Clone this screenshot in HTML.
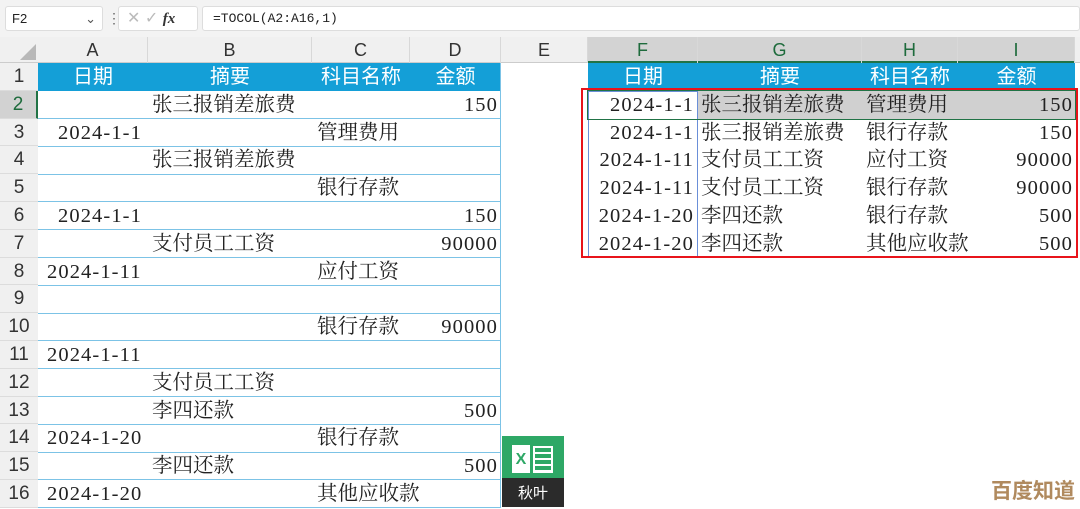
<!DOCTYPE html><html><head><meta charset="utf-8"><style>
*{margin:0;padding:0;box-sizing:border-box}
body{width:1080px;height:508px;overflow:hidden;background:#fff;position:relative;font-family:"Liberation Serif","Noto Serif CJK SC",serif}
.a{position:absolute}
.t{position:absolute;height:27.8px;line-height:29px;font-size:20.5px;color:#222;white-space:nowrap}
.n{letter-spacing:1.1px}
.hdr{position:absolute;top:37px;height:26px;line-height:26px;text-align:center;font-family:"Liberation Sans",sans-serif;font-size:18px;color:#333;border-right:1px solid #d8d8d8}
.rh{position:absolute;left:0;width:38px;height:27.8px;line-height:28px;text-align:center;font-family:"Liberation Sans",sans-serif;font-size:19px;color:#333;background:#f0f0f0;border-bottom:1px solid #dcdcdc}
.bh{position:absolute;top:63px;height:28px;line-height:29px;text-align:center;color:#fff;font-family:"Liberation Sans","Noto Sans CJK SC",sans-serif;font-size:20px}
.hl{position:absolute;left:38px;width:463px;height:1px;background:#7cc3e6}
</style></head><body>
<div class="a" style="left:0;top:0;width:1080px;height:37px;background:#f3f3f3"></div>
<div class="a" style="left:5px;top:6px;width:98px;height:25px;background:#fff;border:1px solid #ddd;border-radius:3px;font:13px 'Liberation Sans',sans-serif;line-height:23px;padding-left:6px;color:#222">F2<span style="position:absolute;right:6px;color:#555">⌄</span></div>
<div class="a" style="left:107px;top:10px;font:14px 'Liberation Sans';color:#666">⋮</div>
<div class="a" style="left:118px;top:6px;width:80px;height:25px;background:#fff;border:1px solid #ddd;border-radius:3px;font:16px 'Liberation Sans';color:#bbb;line-height:23px;padding-left:8px">✕ ✓ <i style="color:#333;font-family:'Liberation Serif';font-weight:bold;font-size:15px">fx</i></div>
<div class="a" style="left:202px;top:6px;width:878px;height:25px;background:#fff;border:1px solid #ddd;border-radius:3px;font:13px 'Liberation Mono',monospace;line-height:23px;padding-left:10px;color:#222">=TOCOL(A2:A16,1)</div>
<div class="a" style="left:0;top:37px;width:1080px;height:26px;background:#f0f0f0;border-bottom:1px solid #ccc"></div>
<div class="a" style="left:20px;top:44px;width:0;height:0;border-left:16px solid transparent;border-bottom:16px solid #b8b8b8"></div>
<div class="hdr" style="left:38px;width:110px">A</div>
<div class="hdr" style="left:148px;width:164px">B</div>
<div class="hdr" style="left:312px;width:98px">C</div>
<div class="hdr" style="left:410px;width:91px">D</div>
<div class="hdr" style="left:501px;width:87px">E</div>
<div class="a" style="left:588px;top:37px;width:487px;height:26px;background:#d3d3d3;border-bottom:2px solid #217346"></div>
<div class="hdr" style="left:588px;width:110px;color:#1e6b3c">F</div>
<div class="hdr" style="left:698px;width:164px;color:#1e6b3c">G</div>
<div class="hdr" style="left:862px;width:96px;color:#1e6b3c">H</div>
<div class="hdr" style="left:958px;width:117px;color:#1e6b3c">I</div>
<div class="rh" style="top:63px">1</div><div class="rh" style="top:90.8px;background:#d2d2d2;color:#1e6b3c;border-right:2px solid #217346">2</div><div class="rh" style="top:118.6px">3</div><div class="rh" style="top:146.4px">4</div><div class="rh" style="top:174.2px">5</div><div class="rh" style="top:202px">6</div><div class="rh" style="top:229.8px">7</div><div class="rh" style="top:257.6px">8</div><div class="rh" style="top:285.4px">9</div><div class="rh" style="top:313.2px">10</div><div class="rh" style="top:341px">11</div><div class="rh" style="top:368.8px">12</div><div class="rh" style="top:396.6px">13</div><div class="rh" style="top:424.4px">14</div><div class="rh" style="top:452.2px">15</div><div class="rh" style="top:480px">16</div>
<div class="a" style="left:38px;top:63px;width:463px;height:28px;background:#149fd7"></div>
<div class="bh" style="left:38px;width:110px">日期</div><div class="bh" style="left:148px;width:164px">摘要</div><div class="bh" style="left:312px;width:98px">科目名称</div><div class="bh" style="left:410px;width:91px">金额</div>
<div class="a" style="left:500px;top:63px;width:1px;height:445px;background:#7cc3e6"></div>
<div class="hl" style="top:118px"></div><div class="hl" style="top:146px"></div><div class="hl" style="top:174px"></div><div class="hl" style="top:201px"></div><div class="hl" style="top:229px"></div><div class="hl" style="top:257px"></div><div class="hl" style="top:285px"></div><div class="hl" style="top:313px"></div><div class="hl" style="top:340px"></div><div class="hl" style="top:368px"></div><div class="hl" style="top:396px"></div><div class="hl" style="top:424px"></div><div class="hl" style="top:452px"></div><div class="hl" style="top:479px"></div><div class="hl" style="top:507px"></div>
<div class="t" style="left:152px;top:90.8px">张三报销差旅费</div><div class="t n" style="right:582px;top:90.8px">150</div>
<div class="t n" style="left:58px;top:118.6px">2024-1-1</div><div class="t" style="left:317px;top:118.6px">管理费用</div>
<div class="t" style="left:152px;top:146.4px">张三报销差旅费</div>
<div class="t" style="left:317px;top:174.2px">银行存款</div>
<div class="t n" style="left:58px;top:202px">2024-1-1</div><div class="t n" style="right:582px;top:202px">150</div>
<div class="t" style="left:152px;top:229.8px">支付员工工资</div><div class="t n" style="right:582px;top:229.8px">90000</div>
<div class="t n" style="left:47px;top:257.6px">2024-1-11</div><div class="t" style="left:317px;top:257.6px">应付工资</div>
<div class="t" style="left:317px;top:313.2px">银行存款</div><div class="t n" style="right:582px;top:313.2px">90000</div>
<div class="t n" style="left:47px;top:341px">2024-1-11</div>
<div class="t" style="left:152px;top:368.8px">支付员工工资</div>
<div class="t" style="left:152px;top:396.6px">李四还款</div><div class="t n" style="right:582px;top:396.6px">500</div>
<div class="t n" style="left:47px;top:424.4px">2024-1-20</div><div class="t" style="left:317px;top:424.4px">银行存款</div>
<div class="t" style="left:152px;top:452.2px">李四还款</div><div class="t n" style="right:582px;top:452.2px">500</div>
<div class="t n" style="left:47px;top:480px">2024-1-20</div><div class="t" style="left:317px;top:480px">其他应收款</div>
<div class="a" style="left:588px;top:63px;width:487px;height:28px;background:#149fd7"></div>
<div class="bh" style="left:588px;width:110px">日期</div><div class="bh" style="left:698px;width:164px">摘要</div><div class="bh" style="left:862px;width:96px">科目名称</div><div class="bh" style="left:958px;width:117px">金额</div>
<div class="a" style="left:698px;top:91px;width:377px;height:28px;background:#d0d0d0"></div>
<div class="a" style="left:588px;top:91px;width:110px;height:166px;border:1px solid #6a8fd8"></div>
<div class="a" style="left:587px;top:90px;width:489px;height:30px;border:1px solid #217346"></div>
<div class="a" style="left:581px;top:88px;width:497px;height:170px;border:2px solid #e8141b"></div>
<div class="t n" style="right:386px;top:90.8px">2024-1-1</div><div class="t" style="left:701px;top:90.8px">张三报销差旅费</div><div class="t" style="left:866px;top:90.8px">管理费用</div><div class="t n" style="right:7px;top:90.8px">150</div>
<div class="t n" style="right:386px;top:118.6px">2024-1-1</div><div class="t" style="left:701px;top:118.6px">张三报销差旅费</div><div class="t" style="left:866px;top:118.6px">银行存款</div><div class="t n" style="right:7px;top:118.6px">150</div>
<div class="t n" style="right:386px;top:146.4px">2024-1-11</div><div class="t" style="left:701px;top:146.4px">支付员工工资</div><div class="t" style="left:866px;top:146.4px">应付工资</div><div class="t n" style="right:7px;top:146.4px">90000</div>
<div class="t n" style="right:386px;top:174.2px">2024-1-11</div><div class="t" style="left:701px;top:174.2px">支付员工工资</div><div class="t" style="left:866px;top:174.2px">银行存款</div><div class="t n" style="right:7px;top:174.2px">90000</div>
<div class="t n" style="right:386px;top:202px">2024-1-20</div><div class="t" style="left:701px;top:202px">李四还款</div><div class="t" style="left:866px;top:202px">银行存款</div><div class="t n" style="right:7px;top:202px">500</div>
<div class="t n" style="right:386px;top:229.8px">2024-1-20</div><div class="t" style="left:701px;top:229.8px">李四还款</div><div class="t" style="left:866px;top:229.8px">其他应收款</div><div class="t n" style="right:7px;top:229.8px">500</div>
<div class="a" style="left:502px;top:436px;width:62px;height:42px;background:#2ea866"></div>
<div class="a" style="left:512px;top:445px;width:18px;height:28px;background:#fff;color:#2ea866;font:bold 16px 'Liberation Sans';text-align:center;line-height:30px">X</div>
<div class="a" style="left:533px;top:446px;width:20px;height:27px;border:2px solid #fff;background:repeating-linear-gradient(#2ea866 0 4px,#fff 4px 6px)"></div>
<div class="a" style="left:502px;top:478px;width:62px;height:29px;background:#2b2b2b;color:#fff;font:15px 'Noto Sans CJK SC',sans-serif;text-align:center;line-height:29px">秋叶</div>
<div class="a" style="left:991px;top:476px;font:bold 21px 'Noto Sans CJK SC',sans-serif;color:#b08a5e;line-height:28px">百度知道</div>
</body></html>
